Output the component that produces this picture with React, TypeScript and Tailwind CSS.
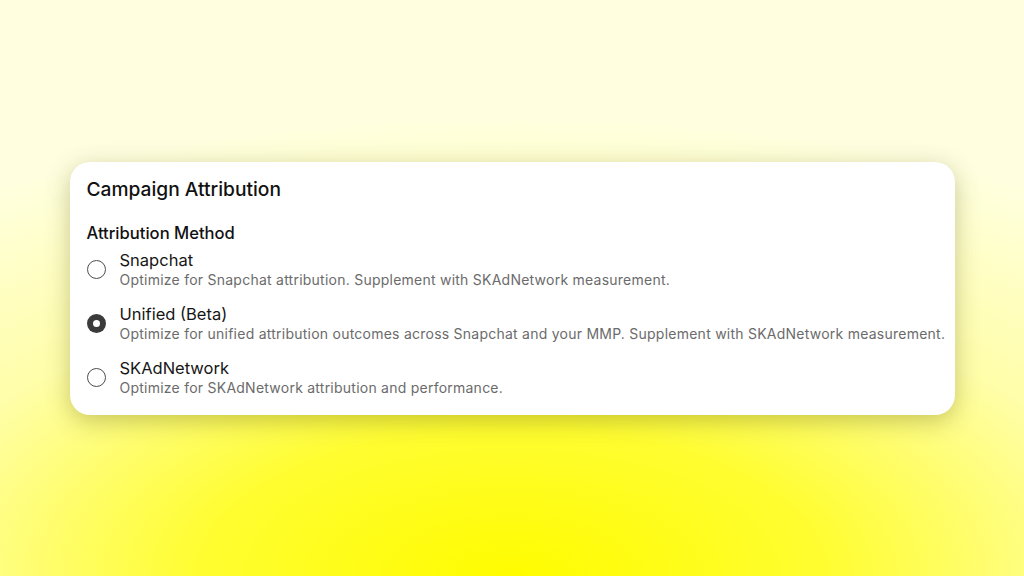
import React from 'react';

type Option = {
  id: string;
  label: string;
  description: string;
};

const options: Option[] = [
  {
    id: 'snapchat',
    label: 'Snapchat',
    description: 'Optimize for Snapchat attribution. Supplement with SKAdNetwork measurement.',
  },
  {
    id: 'unified',
    label: 'Unified (Beta)',
    description:
      'Optimize for unified attribution outcomes across Snapchat and your MMP. Supplement with SKAdNetwork measurement.',
  },
  {
    id: 'skan',
    label: 'SKAdNetwork',
    description: 'Optimize for SKAdNetwork attribution and performance.',
  },
];

const Radio = ({ checked }: { checked: boolean }) => {
  if (checked) {
    return (
      <span className="w-[19px] h-[19px] rounded-full bg-[#3b3b3b] flex items-center justify-center shrink-0">
        <span className="w-[7px] h-[7px] rounded-full bg-white"></span>
      </span>
    );
  }
  return <span className="w-[19px] h-[19px] rounded-full border-[1.5px] border-[#4d4d4d] bg-white shrink-0"></span>;
};

export default function App() {
  const selected = 'unified';

  return (
    <div
      className="w-full h-[576px] flex items-center justify-center bg-[radial-gradient(ellipse_95%_80%_at_50%_100%,#fffc00_0%,#fffd30_32%,#fffea8_64%,#ffffe0_100%)]"
      style={{ fontFamily: 'Inter, "Noto Sans", sans-serif' }}
    >
      {/* Card */}
      <div className="w-[885px] h-[253px] bg-white rounded-[20px] shadow-[0_6px_24px_rgba(70,70,0,0.3)] pl-[17px] pr-[8px] pt-[15px]">
        <h2 className="text-[19.2px] font-medium text-[#111111] leading-[24px]">Campaign Attribution</h2>

        <h3 className="mt-[22px] text-[16.6px] font-medium text-[#111111] leading-[20px]">Attribution Method</h3>

        <div className="mt-[7px] flex flex-col gap-[15px]">
          {options.map((o) => (
            <div key={o.id} className="flex items-center gap-[14px]">
              <Radio checked={o.id === selected} />
              <div className="flex flex-col whitespace-nowrap">
                <span className="text-[16.5px] text-[#161616] leading-[20px]">{o.label}</span>
                <span className="text-[14px] text-[#6b6b6b] leading-[19px] tracking-[0.24px]">{o.description}</span>
              </div>
            </div>
          ))}
        </div>
      </div>
    </div>
  );
}
